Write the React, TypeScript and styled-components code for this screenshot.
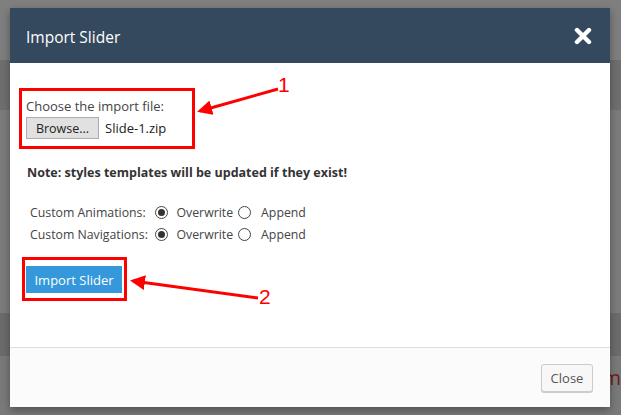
import React, { FC } from 'react'
import styled, { createGlobalStyle } from 'styled-components'

const GlobalStyle = createGlobalStyle`
  html, body {
    margin: 0;
    padding: 0;
  }
  body {
    font-family: 'Open Sans', 'Noto Sans', sans-serif;
    font-size: 13px;
    color: #32373c;
  }
`

const bands = [
  { height: 60, color: '#7f7f7f' },
  { height: 50, color: '#6f6f6f' },
  { height: 203, color: '#7c7c7c' },
  { height: 43, color: '#6c6c6c' },
  { height: 59, color: '#7a7a7a' }
]

const rows = [
  { label: 'Custom Animations:' },
  { label: 'Custom Navigations:' }
]

const Radio: FC<{ checked?: boolean }> = ({ checked }) => (
  <RadioCircle>{ checked ? <RadioDot /> : null }</RadioCircle>
)

const App: FC = () => {
  return (
    <>
      <GlobalStyle />
      <Page>
        <Backdrop>
          {
            bands.map((band, i) => (
              <Band key = { i } style = {{ height: band.height, background: band.color }}>
                { i === 4 ? <BackText>m</BackText> : null }
              </Band>
            ))
          }
        </Backdrop>

        <Modal>
          <Header>
            <Title>Import Slider</Title>
            <CloseIcon viewBox = "0 0 18 18" aria-label = "close">
              <path d = "M3 3 L15 15 M15 3 L3 15" stroke = "#fff" strokeWidth = "4.4" strokeLinecap = "round" />
            </CloseIcon>
          </Header>

          <Body>
            <FileBox>
              <Label>Choose the import file:</Label>
              <FileRow>
                <BrowseButton>Browse...</BrowseButton>
                <FileName>Slide-1.zip</FileName>
              </FileRow>
            </FileBox>

            <Note>Note: styles templates will be updated if they exist!</Note>

            <Options>
              {
                rows.map((row) => (
                  <OptionRow key = { row.label }>
                    <OptionLabel>{ row.label }</OptionLabel>
                    <Radio checked />
                    <OptionText>Overwrite</OptionText>
                    <Radio />
                    <OptionText $last>Append</OptionText>
                  </OptionRow>
                ))
              }
            </Options>

            <ButtonBox>
              <ImportButton>Import Slider</ImportButton>
            </ButtonBox>
          </Body>

          <Footer>
            <FooterButton>Close</FooterButton>
          </Footer>

          <Arrows viewBox = "0 0 600 399" width = "600" height = "399">
            <defs>
              <marker id = "head" viewBox = "0 0 10 10" refX = "8" refY = "5" markerWidth = "5" markerHeight = "5" orient = "auto">
                <path d = "M0 0 L10 5 L0 10 z" fill = "#f00" />
              </marker>
            </defs>
            <line x1 = "268" y1 = "81" x2 = "190" y2 = "103" stroke = "#f00" strokeWidth = "3" markerEnd = "url(#head)" />
            <line x1 = "248" y1 = "290" x2 = "123" y2 = "273" stroke = "#f00" strokeWidth = "3" markerEnd = "url(#head)" />
          </Arrows>
          <Callout style = {{ left: 268, top: 66 }}>1</Callout>
          <Callout style = {{ left: 249, top: 278 }}>2</Callout>
        </Modal>
      </Page>
    </>
  )
}

const Page = styled.div`
  position: relative;
  width: 621px;
  height: 415px;
  overflow: hidden;
  background: #7f7f7f;
`

const Backdrop = styled.div`
  display: flex;
  flex-direction: column;
`

const Band = styled.div`
  display: flex;
  justify-content: flex-end;
  align-items: flex-start;
`

const BackText = styled.span`
  font-family: 'Open Sans', sans-serif;
  font-size: 20px;
  line-height: 22px;
  color: #6b1c1c;
  margin-top: 11px;
  margin-right: 0;
`

const Modal = styled.div`
  position: absolute;
  top: 8px;
  left: 10px;
  width: 600px;
  display: flex;
  flex-direction: column;
  background: #fff;
  box-shadow: 0 3px 8px rgba(0, 0, 0, .35);
`

const Header = styled.div`
  height: 55px;
  background: #34495e;
  display: flex;
  align-items: center;
  justify-content: space-between;
  padding: 0 18px 0 16px;
`

const Title = styled.h2`
  margin: 0;
  font-size: 15.5px;
  font-weight: 400;
  color: #fff;
  margin-top: 2px;
`

const CloseIcon = styled.svg`
  width: 18px;
  height: 18px;
  margin-top: 1px;
`

const Body = styled.div`
  height: 284px;
  box-sizing: border-box;
  padding: 25px 0 0 9px;
  display: flex;
  flex-direction: column;
  align-items: flex-start;
`

const FileBox = styled.div`
  width: 176px;
  height: 61px;
  box-sizing: border-box;
  border: 3px solid #f00;
  padding: 6px 0 0 4px;
`

const Label = styled.div`
  line-height: 18px;
  color: #444;
`

const FileRow = styled.div`
  display: flex;
  align-items: center;
  gap: 6px;
  margin-top: 2px;
`

const BrowseButton = styled.div`
  width: 73px;
  height: 22px;
  box-sizing: border-box;
  background: #e1e1e1;
  border: 1px solid #adadad;
  color: #222;
  display: flex;
  align-items: center;
  justify-content: center;
  font-size: 12.5px;
`

const FileName = styled.span`
  color: #222;
  font-size: 13px;
`

const Note = styled.div`
  margin: 15px 0 0 8px;
  font-size: 12.5px;
  font-weight: 700;
  line-height: 18px;
  color: #333;
`

const Options = styled.div`
  margin: 19px 0 0 11px;
  display: flex;
  flex-direction: column;
  font-size: 12.3px;
`

const OptionRow = styled.div`
  display: flex;
  align-items: center;
  height: 22px;
  color: #444;
`

const OptionLabel = styled.span`
  width: 124.5px;
  flex-shrink: 0;
`

const OptionText = styled.span<{ $last?: boolean }>`
  margin-left: ${ p => p.$last ? 10 : 9 }px;
  margin-right: ${ p => p.$last ? 0 : 5 }px;
`

const RadioCircle = styled.span`
  width: 13px;
  height: 13px;
  box-sizing: border-box;
  border: 1px solid #444;
  border-radius: 50%;
  background: #fff;
  display: flex;
  align-items: center;
  justify-content: center;
  flex-shrink: 0;
`

const RadioDot = styled.span`
  width: 7px;
  height: 7px;
  border-radius: 50%;
  background: #333;
`

const ButtonBox = styled.div`
  margin: 12px 0 0 3px;
  width: 105px;
  height: 44px;
  box-sizing: border-box;
  border: 3px solid #f00;
  padding: 6px 0 0 1px;
`

const ImportButton = styled.div`
  width: 96px;
  height: 27px;
  background: #3498db;
  color: #fff;
  display: flex;
  align-items: center;
  justify-content: center;
  font-size: 13px;
`

const Footer = styled.div`
  height: 60px;
  box-sizing: border-box;
  border-top: 1px solid #ddd;
  background: #fbfbfb;
  display: flex;
  align-items: center;
  justify-content: flex-end;
  padding: 1px 17px 0 0;
`

const FooterButton = styled.div`
  width: 52px;
  height: 28px;
  box-sizing: border-box;
  border: 1px solid #ccc;
  border-radius: 3px;
  background: #f7f7f7;
  box-shadow: 0 1px 0 #ccc;
  color: #555;
  display: flex;
  align-items: center;
  justify-content: center;
  font-size: 13px;
`

const Arrows = styled.svg`
  position: absolute;
  top: 0;
  left: 0;
  pointer-events: none;
`

const Callout = styled.span`
  position: absolute;
  font-family: 'Liberation Sans', Arial, sans-serif;
  font-size: 21px;
  line-height: 22px;
  color: #f00;
`

export default App
